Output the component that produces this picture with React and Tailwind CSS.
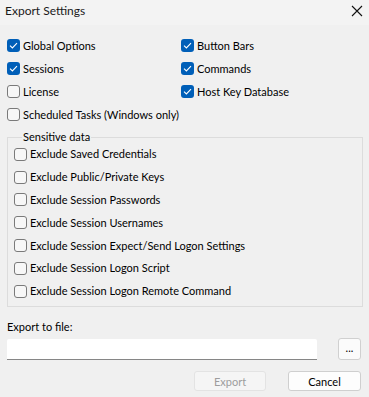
import React from "react";

function Check({ checked }) {
  return checked ? (
    <span className="w-[13px] h-[13px] rounded-[3px] bg-[#005fb8] flex items-center justify-center shrink-0">
      <svg width="9" height="7" viewBox="0 0 9 7" fill="none">
        <path d="M1 3.6 L3.4 6 L8 1.2" stroke="white" strokeWidth="1.1" />
      </svg>
    </span>
  ) : (
    <span className="w-[13px] h-[13px] rounded-[3px] border border-[#7a7a7a] bg-[#f7f7f7] shrink-0" />
  );
}

function Option({ label, checked }) {
  return (
    <div className="flex items-center h-[23px] gap-[3px]">
      <Check checked={checked} />
      <span className="text-[11px] text-black leading-none -mt-[1px]">{label}</span>
    </div>
  );
}

export default function App() {
  const sensitive = [
    "Exclude Saved Credentials",
    "Exclude Public/Private Keys",
    "Exclude Session Passwords",
    "Exclude Session Usernames",
    "Exclude Session Expect/Send Logon Settings",
    "Exclude Session Logon Script",
    "Exclude Session Logon Remote Command",
  ];

  return (
    <div className="w-[369px] h-[397px] bg-[#f0f0f0] font-['Lato',sans-serif] overflow-hidden">
      {/* Title bar */}
      <div className="h-[25px] bg-[#f3f3f3] flex items-center justify-between pl-[5px] pr-[6px]">
        <span className="text-[12px] text-[#1a1a1a] -mt-[3px]">Export Settings</span>
        <svg width="12" height="12" viewBox="0 0 12 12" className="-mt-[4px]">
          <path d="M1 1 L11 11 M11 1 L1 11" stroke="#111" strokeWidth="1.1" />
        </svg>
      </div>

      {/* Top options */}
      <div className="pt-[9px] pl-[7px] grid grid-cols-[174px_1fr]">
        <Option label="Global Options" checked />
        <Option label="Button Bars" checked />
        <Option label="Sessions" checked />
        <Option label="Commands" checked />
        <Option label="License" />
        <Option label="Host Key Database" checked />
        <div className="col-span-2">
          <Option label="Scheduled Tasks (Windows only)" />
        </div>
      </div>

      {/* Sensitive data group */}
      <fieldset className="mx-[7px] mt-[4px] w-[356px] h-[177px] border border-[#dcdcdc] pl-[6px]">
        <legend className="ml-[8px] px-[1px] text-[11px] text-black leading-[14px]">Sensitive data</legend>
        <div className="flex flex-col -mt-[1px]">
          {sensitive.map((s) => (
            <div key={s} className="flex items-center h-[22.8px] gap-[3px]">
              <Check />
              <span className="text-[11px] text-black leading-none -mt-[1px]">{s}</span>
            </div>
          ))}
        </div>
      </fieldset>

      {/* Export to file */}
      <div className="px-[7px] mt-[12px]">
        <div className="text-[11px] text-black leading-[16px]">Export to file:</div>
        <div className="flex items-center justify-between mt-[3px]">
          <div className="w-[310px] h-[21px] bg-white border-b border-[#868686] rounded-t-[2px]" />
          <button className="w-[23px] h-[22px] bg-[#fbfbfb] border border-[#d0d0d0] rounded-[3px] text-[11px] leading-none text-black flex items-end justify-center pb-[6px] mr-[1px]">
            ...
          </button>
        </div>
        <div className="flex justify-end gap-[22px] mt-[11px] pr-[1px]">
          <button className="w-[72px] h-[20px] bg-[#f5f5f5] border border-[#e3e3e3] rounded-[3px] text-[11px] leading-none text-[#9d9d9d]">
            Export
          </button>
          <button className="w-[73px] h-[20px] bg-[#fdfdfd] border border-[#cfcfcf] rounded-[3px] text-[11px] leading-none text-black">
            Cancel
          </button>
        </div>
      </div>
    </div>
  );
}
